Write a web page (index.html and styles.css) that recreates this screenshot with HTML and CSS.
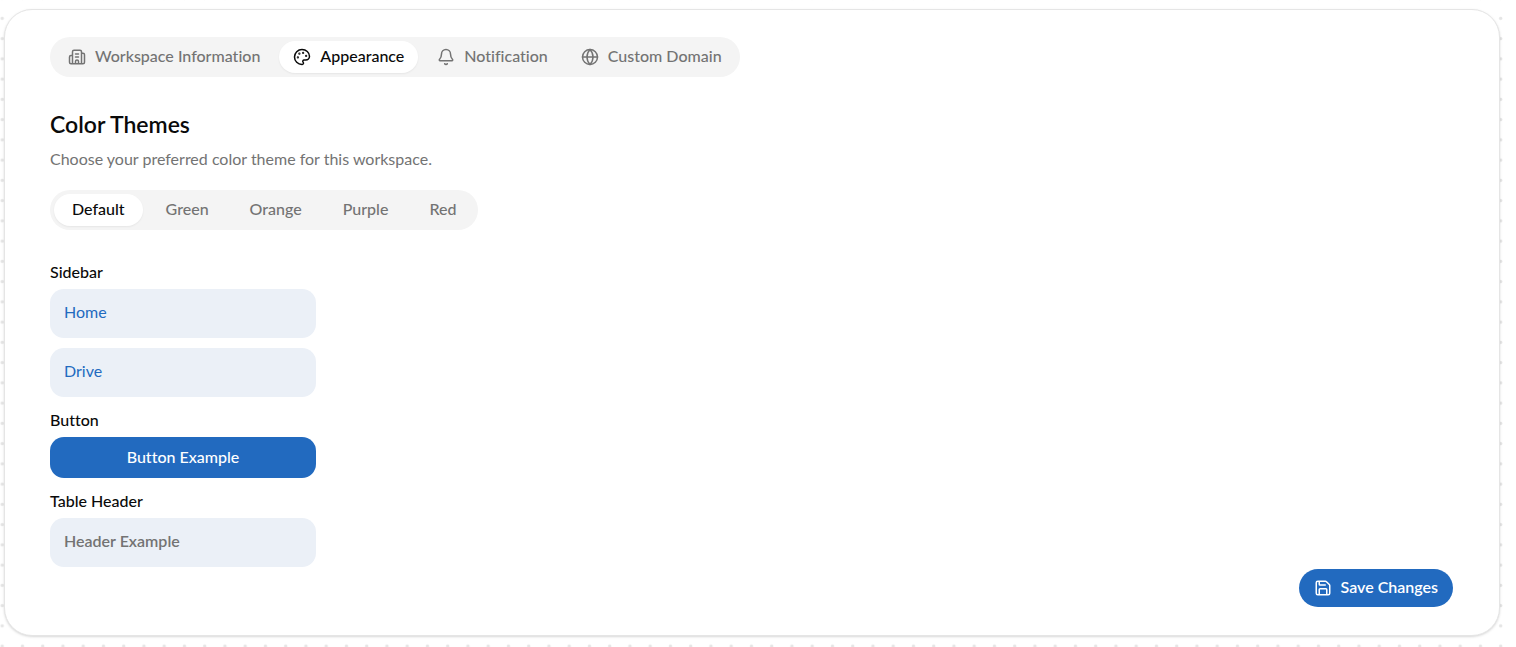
FILE: index.html
```
<!DOCTYPE html>
<html lang="en">
<head>
<meta charset="utf-8">
<title>Workspace Appearance</title>
<link rel="stylesheet" href="styles.css">
</head>
<body>
<svg class="dots" aria-hidden="true">
  <defs>
    <pattern id="dot-grid" x="-8" y="-12" width="20.25" height="20.25" patternUnits="userSpaceOnUse">
      <circle cx="10.2" cy="10.1" r="1.7" fill="#e5e5e5"/>
    </pattern>
  </defs>
  <rect width="100%" height="100%" fill="url(#dot-grid)"/>
</svg>
<main class="card">
  <div class="tabs" role="tablist" aria-label="Settings">
    <button class="tab" type="button" role="tab" aria-selected="false">
      <svg class="icon" viewBox="0 0 24 24" aria-hidden="true"><path d="M10 12h4M10 8h4M14 21v-3a2 2 0 0 0-4 0v3M6 10H4a2 2 0 0 0-2 2v7a2 2 0 0 0 2 2h16a2 2 0 0 0 2-2V9a2 2 0 0 0-2-2h-2M6 21V5a2 2 0 0 1 2-2h8a2 2 0 0 1 2 2v16"/></svg>
      <span class="text">Workspace Information</span>
    </button>
    <button class="tab active" type="button" role="tab" aria-selected="true">
      <svg class="icon" viewBox="0 0 24 24" aria-hidden="true"><path d="M12 22a1 1 0 0 1 0-20 10 9 0 0 1 10 9 5 5 0 0 1-5 5h-2.25a1.75 1.75 0 0 0-1.4 2.8l.3.4a1.75 1.75 0 0 1-1.4 2.8z"/><circle class="dot" cx="13.5" cy="6.5" r=".5"/><circle class="dot" cx="17.5" cy="10.5" r=".5"/><circle class="dot" cx="6.5" cy="12.5" r=".5"/><circle class="dot" cx="8.5" cy="7.5" r=".5"/></svg>
      <span class="text">Appearance</span>
    </button>
    <button class="tab" type="button" role="tab" aria-selected="false">
      <svg class="icon" viewBox="0 0 24 24" aria-hidden="true"><path d="M10.268 21a2 2 0 0 0 3.464 0M3.262 15.326A1 1 0 0 0 4 17h16a1 1 0 0 0 .74-1.673C19.41 13.956 18 12.499 18 8A6 6 0 0 0 6 8c0 4.499-1.411 5.956-2.738 7.326"/></svg>
      <span class="text">Notification</span>
    </button>
    <button class="tab" type="button" role="tab" aria-selected="false">
      <svg class="icon" viewBox="0 0 24 24" aria-hidden="true"><circle cx="12" cy="12" r="10"/><path d="M12 2a14.5 14.5 0 0 0 0 20 14.5 14.5 0 0 0 0-20M2 12h20"/></svg>
      <span class="text">Custom Domain</span>
    </button>
  </div>

  <h1 class="title">Color Themes</h1>
  <p class="description">Choose your preferred color theme for this workspace.</p>

  <div class="tabs themes" role="tablist" aria-label="Color theme">
    <button class="tab active" type="button" role="tab" aria-selected="true"><span class="text">Default</span></button>
    <button class="tab" type="button" role="tab" aria-selected="false"><span class="text">Green</span></button>
    <button class="tab" type="button" role="tab" aria-selected="false"><span class="text">Orange</span></button>
    <button class="tab" type="button" role="tab" aria-selected="false"><span class="text">Purple</span></button>
    <button class="tab" type="button" role="tab" aria-selected="false"><span class="text">Red</span></button>
  </div>

  <div class="preview">
    <section class="sample">
      <h2 class="label">Sidebar</h2>
      <nav class="links">
        <a class="block" href="#home">Home</a>
        <a class="block" href="#drive">Drive</a>
      </nav>
    </section>
    <section class="sample">
      <h2 class="label">Button</h2>
      <button class="example" type="button"><span class="text">Button Example</span></button>
    </section>
    <section class="sample">
      <h2 class="label" id="table-label">Table Header</h2>
      <table class="table" aria-labelledby="table-label"><thead><tr><th class="block" scope="col">Header Example</th></tr></thead></table>
    </section>
  </div>

  <button class="save" type="button">
    <svg class="icon" viewBox="0 0 24 24" aria-hidden="true"><path d="M15.2 3a2 2 0 0 1 1.4.6l3.8 3.8a2 2 0 0 1 .6 1.4V19a2 2 0 0 1-2 2H5a2 2 0 0 1-2-2V5a2 2 0 0 1 2-2zM17 21v-7a1 1 0 0 0-1-1H8a1 1 0 0 0-1 1v7M7 3v4a1 1 0 0 0 1 1h7"/></svg>
    <span class="text">Save Changes</span>
  </button>
</main>
</body>
</html>
```
FILE: styles.css
```
* {
  box-sizing: border-box;
}

body {
  margin: 0;
  padding: 9px 16px 11px 4px;
  background: #fff;
  color: #0a0a0a;
  font: 500 16px/24px Lato, "Liberation Sans", sans-serif;
  font-variant-ligatures: none;
}

button {
  border: 0;
  font: inherit;
  font-variant-ligatures: inherit;
  cursor: pointer;
}

.text {
  display: block;
  padding-bottom: 2px;
}

.dots {
  position: absolute;
  inset: 0;
  z-index: -1;
  width: 100%;
  height: 100%;
}

.card {
  display: flex;
  flex-direction: column;
  align-items: flex-start;
  min-height: calc(100vh - 20px);
  padding: 27px 46px 28px 45px;
  background: #fff;
  border: 1px solid #e5e5e5;
  border-radius: 28px;
  box-shadow: 0 1px 3px rgb(0 0 0 / 10%), 0 1px 2px rgb(0 0 0 / 6%);
}

.tabs {
  display: flex;
  gap: 5px;
  padding: 4px;
  background: #f4f4f4;
  border-radius: 20px;
}

.tab {
  display: flex;
  align-items: center;
  gap: 9px;
  height: 32px;
  padding: 0 14px;
  background: transparent;
  border-radius: 16px;
  color: #737373;
}

.themes .tab {
  padding: 0 18px;
}

.tab.active {
  background: #fff;
  color: #0a0a0a;
  box-shadow: 0 1px 2px rgb(0 0 0 / 6%);
}

.icon {
  width: 18px;
  height: 18px;
  fill: none;
  stroke: currentColor;
  stroke-width: 2;
  stroke-linecap: round;
  stroke-linejoin: round;
}

.dot {
  fill: currentColor;
}

.title {
  margin: 33px 0 9px;
  font-size: 23px;
  font-weight: 600;
  line-height: 28px;
}

.description {
  margin: 0 0 19px;
  color: #737373;
  font-weight: 400;
}

.preview {
  display: flex;
  flex-direction: column;
  gap: 11px;
  width: 266px;
  margin-top: 30px;
}

.label {
  margin: 0 0 5px;
  font-size: 16px;
  font-weight: 500;
}

.links {
  display: flex;
  flex-direction: column;
  gap: 10px;
}

.block {
  height: 49px;
  padding: 11px 14px 14px;
  background: #ebf0f7;
  border-radius: 14px;
  color: #226abf;
  font-weight: 400;
  text-align: left;
  text-decoration: none;
}

.table {
  width: 100%;
  border-spacing: 0;
}

.table .block {
  color: #737373;
  font-weight: 600;
}

.example {
  width: 100%;
  height: 41px;
  background: #226abf;
  border-radius: 14px;
  color: #fff;
}

.save {
  display: flex;
  align-items: center;
  gap: 9px;
  height: 38px;
  margin-top: auto;
  margin-left: auto;
  padding: 0 15px;
  background: #226abf;
  border-radius: 19px;
  color: #fff;
  font-weight: 600;
}
```
